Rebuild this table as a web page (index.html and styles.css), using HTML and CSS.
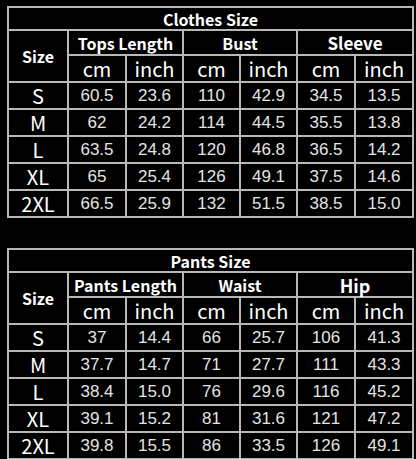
FILE: index.html
```html
<!DOCTYPE html>
<html>
<head>
<meta charset="utf-8">
<link rel="stylesheet" href="styles.css">
</head>
<body>
<div class="page">
  <table class="size-table">
    <colgroup>
      <col class="c-size"><col class="c-a"><col class="c-b"><col class="c-b"><col class="c-b"><col class="c-a"><col class="c-c">
    </colgroup>
    <tr class="r-title"><th colspan="7" class="title">Clothes Size</th></tr>
    <tr class="r-h1">
      <th rowspan="2" class="size-h">Size</th>
      <th colspan="2" class="grp">Tops Length</th>
      <th colspan="2" class="grp">Bust</th>
      <th colspan="2" class="grp big">Sleeve</th>
    </tr>
    <tr class="r-h2">
      <th class="unit">cm</th><th class="unit">inch</th>
      <th class="unit">cm</th><th class="unit">inch</th>
      <th class="unit">cm</th><th class="unit">inch</th>
    </tr>
    <tr class="r-d"><td class="sz">S</td><td>60.5</td><td>23.6</td><td>110</td><td>42.9</td><td>34.5</td><td>13.5</td></tr>
    <tr class="r-d"><td class="sz">M</td><td>62</td><td>24.2</td><td>114</td><td>44.5</td><td>35.5</td><td>13.8</td></tr>
    <tr class="r-d"><td class="sz">L</td><td>63.5</td><td>24.8</td><td>120</td><td>46.8</td><td>36.5</td><td>14.2</td></tr>
    <tr class="r-d"><td class="sz">XL</td><td>65</td><td>25.4</td><td>126</td><td>49.1</td><td>37.5</td><td>14.6</td></tr>
    <tr class="r-d"><td class="sz">2XL</td><td>66.5</td><td>25.9</td><td>132</td><td>51.5</td><td>38.5</td><td>15.0</td></tr>
  </table>

  <table class="size-table second">
    <colgroup>
      <col class="c-size"><col class="c-a"><col class="c-b"><col class="c-b"><col class="c-b"><col class="c-a"><col class="c-c">
    </colgroup>
    <tr class="r-title"><th colspan="7" class="title">Pants Size</th></tr>
    <tr class="r-h1">
      <th rowspan="2" class="size-h">Size</th>
      <th colspan="2" class="grp">Pants Length</th>
      <th colspan="2" class="grp">Waist</th>
      <th colspan="2" class="grp bigger">Hip</th>
    </tr>
    <tr class="r-h2">
      <th class="unit">cm</th><th class="unit">inch</th>
      <th class="unit">cm</th><th class="unit">inch</th>
      <th class="unit">cm</th><th class="unit">inch</th>
    </tr>
    <tr class="r-d"><td class="sz">S</td><td>37</td><td>14.4</td><td>66</td><td>25.7</td><td>106</td><td>41.3</td></tr>
    <tr class="r-d"><td class="sz">M</td><td>37.7</td><td>14.7</td><td>71</td><td>27.7</td><td>111</td><td>43.3</td></tr>
    <tr class="r-d"><td class="sz">L</td><td>38.4</td><td>15.0</td><td>76</td><td>29.6</td><td>116</td><td>45.2</td></tr>
    <tr class="r-d"><td class="sz">XL</td><td>39.1</td><td>15.2</td><td>81</td><td>31.6</td><td>121</td><td>47.2</td></tr>
    <tr class="r-d"><td class="sz">2XL</td><td>39.8</td><td>15.5</td><td>86</td><td>33.5</td><td>126</td><td>49.1</td></tr>
  </table>
</div>
</body>
</html>
```

FILE: styles.css
```css
html, body {
  margin: 0;
  padding: 0;
  background: #000;
}
.page {
  padding: 6px 0 0 7px;
  width: 405px;
}
.size-table {
  border-collapse: collapse;
  table-layout: fixed;
  width: 405px;
  border: 2px solid #e4e4e4;
  color: #fff;
  font-family: "Noto Sans CJK SC", "Noto Sans", sans-serif;
}
.size-table.second {
  margin-top: 30px;
}
.c-size { width: 60px; }
.c-a { width: 58px; }
.c-b { width: 57px; }
.c-c { width: 58px; }
.size-table th, .size-table td {
  border: 2px solid #b8b8b8;
  padding: 0;
  text-align: center;
  vertical-align: middle;
  line-height: 1;
}
.r-title { height: 23px; }
.r-h1 { height: 25px; }
.r-h2 { height: 27px; }
.r-d { height: 27px; }
.title {
  font-size: 16px;
  font-weight: 700;
}
.size-h {
  font-size: 16px;
  font-weight: 700;
}
.grp {
  font-size: 16px;
  font-weight: 700;
}
.grp.big { font-size: 17px; }
.grp.bigger { font-size: 18px; }
.unit {
  font-size: 20px;
  font-weight: 400;
}
.size-table td {
  font-family: "Liberation Sans Narrow", "Liberation Sans", sans-serif;
  font-size: 17px;
  color: #e4e4e4;
}
.size-table td.sz {
  font-family: "Noto Sans CJK SC", "Noto Sans", sans-serif;
  font-size: 20px;
  color: #fff;
  font-weight: 400;
}
```
